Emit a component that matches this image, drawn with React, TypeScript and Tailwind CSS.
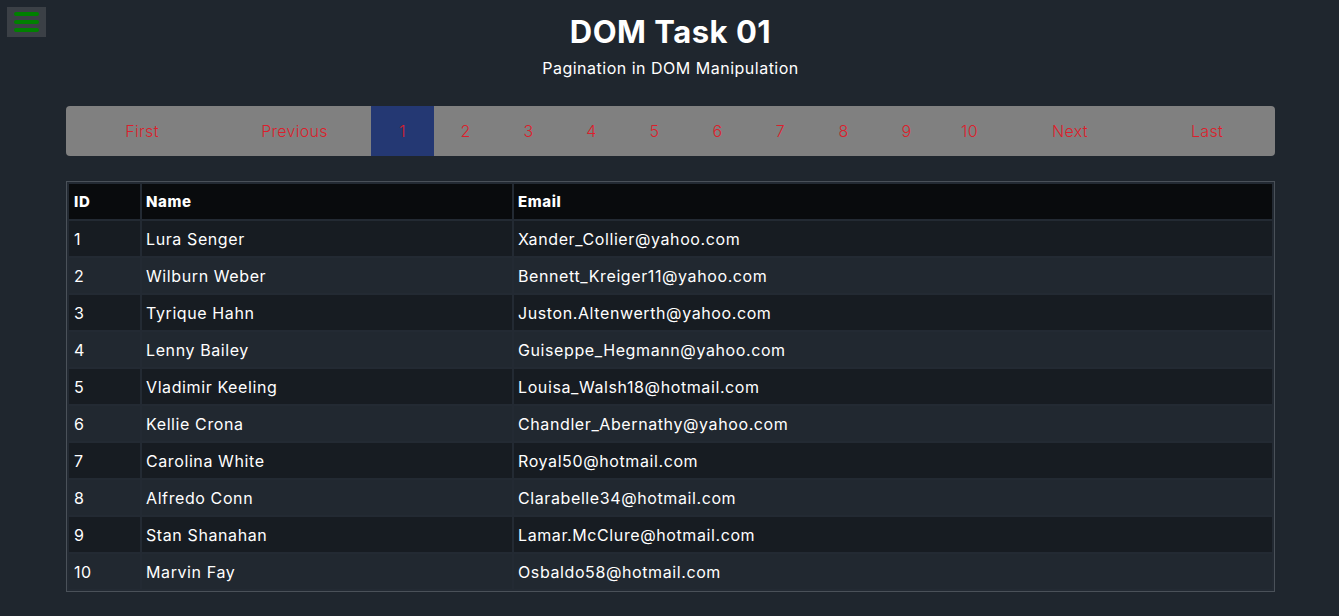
import { useState } from "react";

type User = { id: number; name: string; email: string };

const users: User[] = [
  { id: 1, name: "Lura Senger", email: "Xander_Collier@yahoo.com" },
  { id: 2, name: "Wilburn Weber", email: "Bennett_Kreiger11@yahoo.com" },
  { id: 3, name: "Tyrique Hahn", email: "Juston.Altenwerth@yahoo.com" },
  { id: 4, name: "Lenny Bailey", email: "Guiseppe_Hegmann@yahoo.com" },
  { id: 5, name: "Vladimir Keeling", email: "Louisa_Walsh18@hotmail.com" },
  { id: 6, name: "Kellie Crona", email: "Chandler_Abernathy@yahoo.com" },
  { id: 7, name: "Carolina White", email: "Royal50@hotmail.com" },
  { id: 8, name: "Alfredo Conn", email: "Clarabelle34@hotmail.com" },
  { id: 9, name: "Stan Shanahan", email: "Lamar.McClure@hotmail.com" },
  { id: 10, name: "Marvin Fay", email: "Osbaldo58@hotmail.com" },
];

const pages = [1, 2, 3, 4, 5, 6, 7, 8, 9, 10];

export default function App() {
  const [page, setPage] = useState(1);

  return (
    <div className="relative min-h-[616px] bg-[#1f262e] text-white font-['Inter',sans-serif]">
      {/* Menu button */}
      <button className="absolute left-[7px] top-[7px] flex h-[30px] w-[39px] flex-col items-center justify-center gap-[4px] bg-[#3b4046]">
        <span className="block h-[4px] w-[25px] rounded-full bg-[#008000]" />
        <span className="block h-[4px] w-[25px] rounded-full bg-[#008000]" />
        <span className="block h-[4px] w-[25px] rounded-full bg-[#008000]" />
      </button>

      <div className="ml-[66px] mr-[64px] pt-[8px]">
        <h1 className="text-center text-[31px] font-bold leading-[48px] tracking-[0.5px]">DOM Task 01</h1>
        <p className="text-center text-[16px] leading-[24px] tracking-[0.5px]">Pagination in DOM Manipulation</p>

        {/* Pagination */}
        <div className="mt-[26px] flex h-[50px] items-stretch overflow-hidden rounded-[4px] bg-[#808080] text-[16px] font-light tracking-[0.3px] text-[#dc1f2c]">
          <button className="w-[152px]" onClick={() => setPage(1)}>First</button>
          <button className="w-[153px]" onClick={() => setPage(Math.max(1, page - 1))}>Previous</button>
          {pages.map((p) => (
            <button
              key={p}
              onClick={() => setPage(p)}
              className={p === page ? "w-[63px] bg-[#243873]" : "w-[63px]"}
            >
              {p}
            </button>
          ))}
          <button className="w-[138px]" onClick={() => setPage(Math.min(10, page + 1))}>Next</button>
          <button className="flex-1" onClick={() => setPage(10)}>Last</button>
        </div>

        {/* Table */}
        <table className="mt-[25px] w-full border-separate border-spacing-[2px] border border-[#4a5159] bg-[#232a33] text-left text-[16px] leading-[20px] tracking-[0.6px]">
          <thead>
            <tr className="bg-[#090b0d]">
              <th className="h-[35px] w-[71px] px-[5px] py-0 text-[15px] font-extrabold">ID</th>
              <th className="h-[35px] w-[370px] px-[4px] text-[15px] font-extrabold">Name</th>
              <th className="h-[35px] px-[4px] text-[15px] font-extrabold">Email</th>
            </tr>
          </thead>
          <tbody>
            {users.map((u) => (
              <tr key={u.id} className={u.id % 2 === 1 ? "bg-[#171c22]" : "bg-[#212830]"}>
                <td className="h-[35px] px-[5px]">{u.id}</td>
                <td className="h-[35px] px-[4px]">{u.name}</td>
                <td className="h-[35px] px-[4px]">{u.email}</td>
              </tr>
            ))}
          </tbody>
        </table>
      </div>
    </div>
  );
}
